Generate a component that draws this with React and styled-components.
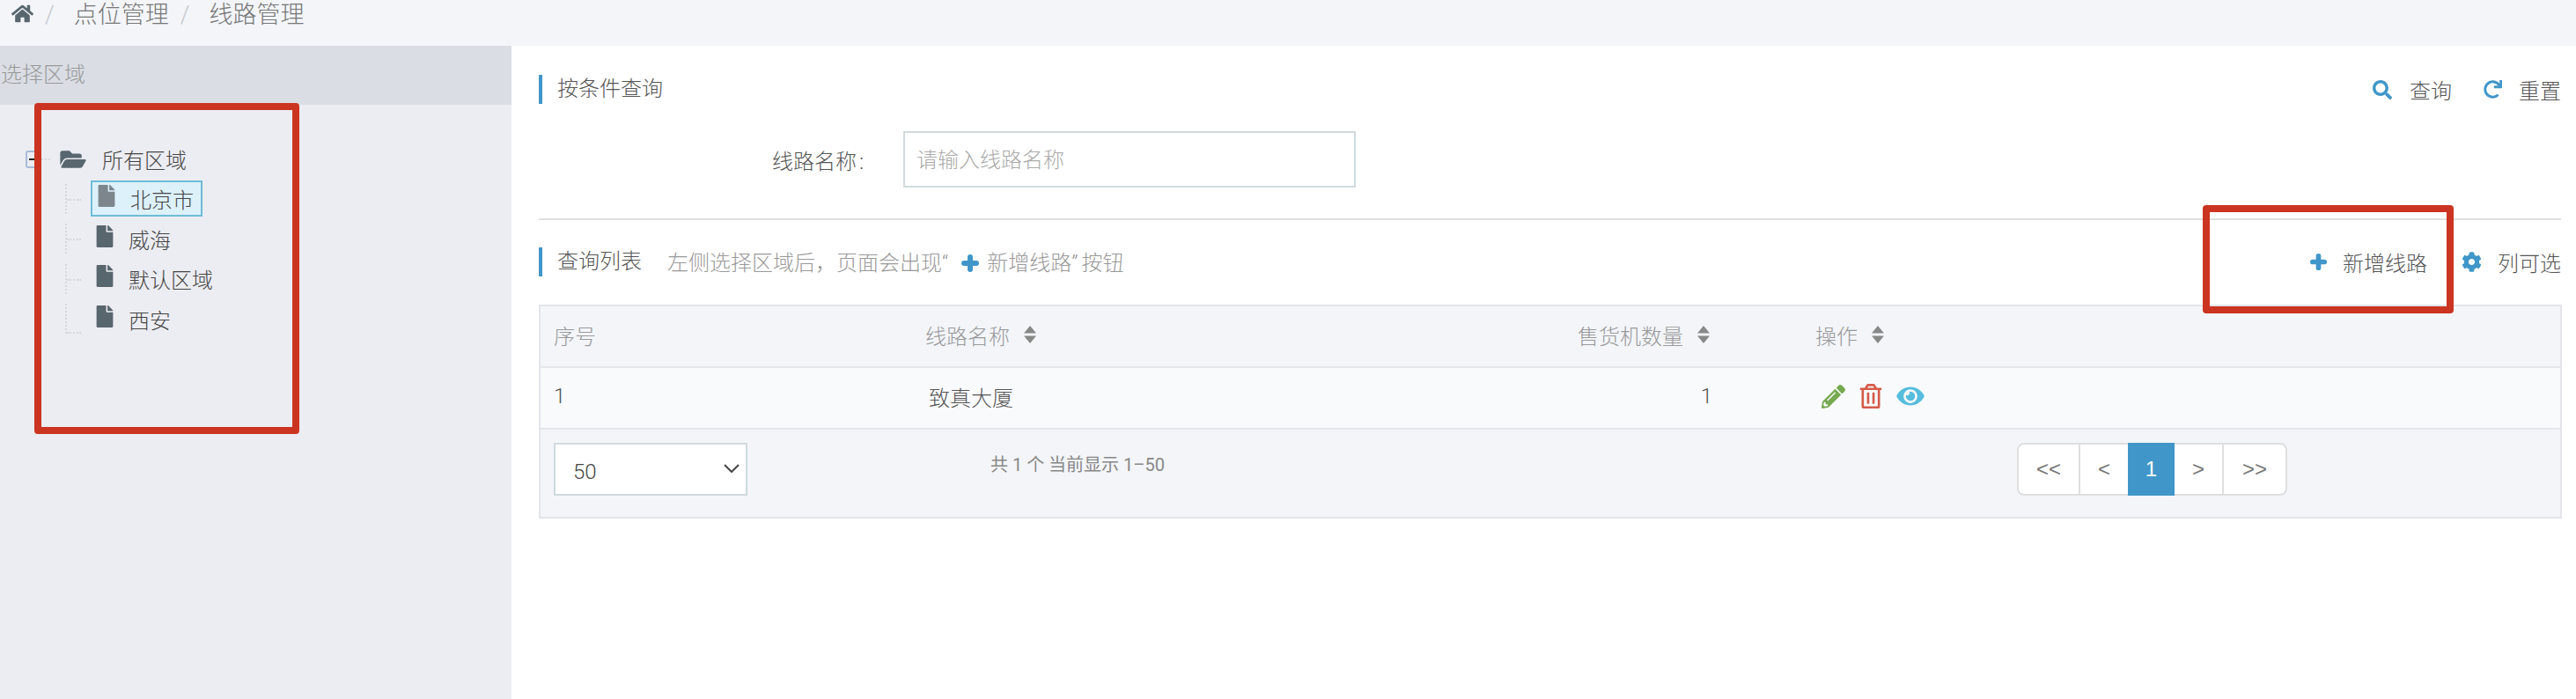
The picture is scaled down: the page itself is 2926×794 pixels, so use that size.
import styled, { createGlobalStyle } from 'styled-components';
import {
  FaHome, FaFolderOpen, FaFile, FaSearch, FaRedo, FaCog,
  FaPencilAlt, FaRegTrashAlt, FaEye,
} from 'react-icons/fa';

const GlobalStyle = createGlobalStyle`
  html, body {
    margin: 0;
    padding: 0;
    background: #fff;
  }
  body {
    font-family: Roboto, "Noto Sans CJK SC", sans-serif;
    font-size: 24px;
    font-weight: 300;
    color: #555;
  }
`;

const Page = styled.div`
  position: relative;
  width: 2926px;
  height: 794px;
  overflow: hidden;
`;

const TopBar = styled.div`
  height: 52px;
  box-sizing: border-box;
  padding: 2px 0 0 13px;
  background: #f3f5f9;
  display: flex;
  align-items: flex-start;
  color: #777;
  font-size: 27px;
  line-height: 30px;
`;

const HomeIcon = styled(FaHome)`
  width: 25px;
  height: 25px;
  margin-top: 1px;
  color: #58666e;
`;

const Slash = styled.span`
  color: #c5c8cc;
  margin: 0 ${(p) => p.$after}px 0 13px;
`;

const Body = styled.div`
  display: flex;
  height: 742px;
`;

const Sidebar = styled.aside`
  width: 581px;
  flex: none;
  background: #ecedf2;
`;

const SidebarTitle = styled.div`
  height: 67px;
  background: #dadde4;
  color: #999;
  line-height: 66px;
  padding-left: 1px;
`;

const Tree = styled.div`
  padding: 39px 0 0 29px;
`;

const RootRow = styled.div`
  display: flex;
  align-items: center;
  height: 45px;
  color: #444;
`;

const Toggle = styled.span`
  box-sizing: border-box;
  width: 18px;
  height: 20px;
  border: 2px solid #a8bbd6;
  border-radius: 3px;
  display: flex;
  align-items: center;
  justify-content: center;

  &::before {
    content: '';
    width: 10px;
    height: 2px;
    background: #222;
  }
`;

const RootDots = styled.span`
  width: 10px;
  margin-right: 11px;
  border-top: 2px dotted #d5d7dc;
`;

const RootFolder = styled(FaFolderOpen)`
  width: 30px;
  height: 26px;
  color: #58666e;
`;

const RootLabel = styled.span`
  margin-left: 18px;
`;

const TreeRow = styled.div`
  display: flex;
  align-items: center;
  height: 45.5px;
  margin-left: 45px;
  color: #444;
`;

const Connector = styled.span`
  position: relative;
  width: 29px;
  height: 34px;
  flex: none;
  border-left: 2px dotted #d5d7dc;
  box-sizing: border-box;

  &::after {
    content: '';
    position: absolute;
    left: 0;
    top: ${(p) => (p.$last ? '32px' : '17px')};
    width: 16px;
    border-top: 2px dotted #d5d7dc;
  }
`;

const TreeNode = styled.span`
  display: flex;
  align-items: center;
  box-sizing: border-box;
  height: 41px;
  padding: 0 ${(p) => (p.$selected ? '8px' : '6px')} 0 6px;
  border: ${(p) => (p.$selected ? '2px solid #6fbcd6' : 'none')};
  background: ${(p) => (p.$selected ? '#ddf1fb' : 'transparent')};
`;

const FileIcon = styled(FaFile)`
  width: 20px;
  height: 25px;
  margin-top: -6px;
  color: ${(p) => (p.$selected ? '#7c868c' : '#58666e')};
`;

const NodeLabel = styled.span`
  margin-left: 17px;
`;

const Main = styled.main`
  flex: 1;
  padding: 33px 16px 0 31px;
`;

const SectionHead = styled.div`
  display: flex;
  align-items: center;
  height: 33px;
  padding-right: 1px;
`;

const SectionTitle = styled.div`
  border-left: 4px solid #4096c8;
  height: 33px;
  line-height: 33px;
  padding-left: 17px;
  color: #555;
`;

const Hint = styled.span`
  margin: -2px 0 0 29px;
  color: #999;
`;

const Quote = styled.span`
  margin-right: 4px;
`;

const PlusGlyph = styled.svg`
  width: ${(p) => p.$size}px;
  height: ${(p) => p.$size}px;
  color: #4096c8;
`;

const HintPlus = styled(PlusGlyph)`
  margin: 0 9px 0 11px;
  vertical-align: -2px;
`;

const Actions = styled.div`
  margin-left: auto;
  display: flex;
  align-items: center;
`;

const Action = styled.span`
  display: flex;
  align-items: center;
  margin-left: ${(p) => p.$gap}px;
  color: #555;

  svg {
    width: ${(p) => p.$icon}px;
    height: ${(p) => p.$icon}px;
    margin-right: ${(p) => p.$space}px;
    color: #4096c8;
  }
`;

const FormRow = styled.div`
  display: flex;
  align-items: center;
  margin-top: 31px;
`;

const FieldLabel = styled.label`
  width: 370px;
  text-align: right;
  color: #555;
`;

const Colon = styled.span`
  padding: 0 1px 0 3px;
`;

const TextInput = styled.div`
  box-sizing: border-box;
  width: 514px;
  height: 64px;
  margin-left: 44px;
  padding-left: 13px;
  border: 2px solid #d0dadf;
  background: #fff;
  color: #aaa;
  line-height: 62px;
`;

const Divider = styled.div`
  height: 2px;
  margin: 35px 1px 31px 0;
  background: #dfdfdf;
`;

const Table = styled.div`
  margin-top: 32px;
  border: 2px solid #e3e5ea;
  background: #f3f5f9;
`;

const Row = styled.div`
  display: grid;
  grid-template-columns: 423px 640px 270px 1fr;
  box-sizing: border-box;
  height: 70px;
  padding-bottom: 4px;
  align-items: center;
  border-bottom: 2px solid #e3e5ea;
  background: ${(p) => (p.$head ? '#f3f5f9' : '#f9fafc')};
  color: ${(p) => (p.$head ? '#999' : '#555')};
`;

const Cell = styled.div`
  display: flex;
  align-items: center;
  justify-content: ${(p) => (p.$right !== undefined ? 'flex-end' : 'flex-start')};
  padding-left: ${(p) => p.$left || 0}px;
  padding-right: ${(p) => p.$right || 0}px;
`;

const SortGlyph = styled.svg`
  width: 14px;
  height: 20px;
  margin-left: 16px;
  color: #888;
`;

const RowIcons = styled.div`
  display: flex;
  align-items: center;
  padding-left: 122px;
`;

const EditIcon = styled(FaPencilAlt)`
  width: 27px;
  height: 27px;
  color: #76a94f;
`;

const TrashIcon = styled(FaRegTrashAlt)`
  width: 26px;
  height: 28px;
  margin-left: 16px;
  color: #d45a48;
`;

const ViewIcon = styled(FaEye)`
  width: 32px;
  height: 28px;
  margin-left: 16px;
  color: #56bddd;
`;

const TableFoot = styled.div`
  display: flex;
  align-items: flex-start;
  box-sizing: border-box;
  height: 99px;
  padding: 15px 0 0 15px;
`;

const PageSize = styled.div`
  box-sizing: border-box;
  width: 220px;
  height: 60px;
  display: flex;
  align-items: center;
  justify-content: space-between;
  padding: 6px 7px 0 20px;
  border: 2px solid #d0dadf;
  background: #fff;
  color: #444;
`;

const ChevronGlyph = styled.svg`
  width: 18px;
  height: 10px;
  margin-top: -8px;
`;

const Summary = styled.div`
  width: 1442px;
  box-sizing: border-box;
  padding-left: 276px;
  line-height: 50px;
  font-size: 20px;
  font-weight: 400;
  color: #888;
`;

const Pager = styled.div`
  display: flex;
  height: 60px;
  box-sizing: border-box;
  border: 2px solid #dfdfdf;
  border-radius: 8px;
  background: #fff;
  font-family: "Liberation Sans", sans-serif;
  font-weight: 400;
`;

const PageCell = styled.span`
  display: flex;
  align-items: center;
  justify-content: center;
  width: ${(p) => p.$w}px;
  margin: ${(p) => (p.$active ? '-2px 0' : '0')};
  border-left: ${(p) => (p.$plain ? 'none' : '2px solid #dfdfdf')};
  background: ${(p) => (p.$active ? '#4096c8' : 'transparent')};
  color: ${(p) => (p.$active ? '#fff' : '#777')};
`;

const Annotation = styled.div`
  position: absolute;
  left: ${(p) => p.$x}px;
  top: ${(p) => p.$y}px;
  width: ${(p) => p.$w}px;
  height: ${(p) => p.$h}px;
  box-sizing: border-box;
  border: 8px solid #cb3421;
  border-radius: 4px;
`;

const Plus = ({ as: Glyph = PlusGlyph, size }) => (
  <Glyph $size={size} viewBox="0 0 20 20" fill="none">
    <path d="M10 3v14M3 10h14" stroke="currentColor" strokeWidth="6" strokeLinecap="round" />
  </Glyph>
);

const Sort = () => (
  <SortGlyph viewBox="0 0 14 20" fill="currentColor">
    <path d="M7 0l7 8.5H0zM0 11.5h14L7 20z" />
  </SortGlyph>
);

const Chevron = () => (
  <ChevronGlyph viewBox="0 0 18 10" fill="none">
    <path d="M1 1l8 8 8-8" stroke="#444" strokeWidth="2" />
  </ChevronGlyph>
);

const areas = ['威海', '默认区域', '西安'];

const pages = [
  { label: '<<', w: 68, plain: true },
  { label: '<', w: 54 },
  { label: '1', w: 53, active: true, plain: true },
  { label: '>', w: 54, plain: true },
  { label: '>>', w: 70 },
];

export default function App() {
  return (
    <Page>
      <GlobalStyle />
      <TopBar>
        <HomeIcon />
        <Slash $after={22}>/</Slash>
        <span>点位管理</span>
        <Slash $after={22}>/</Slash>
        <span>线路管理</span>
      </TopBar>

      <Body>
        <Sidebar>
          <SidebarTitle>选择区域</SidebarTitle>
          <Tree>
            <RootRow>
              <Toggle />
              <RootDots />
              <RootFolder />
              <RootLabel>所有区域</RootLabel>
            </RootRow>
            <TreeRow>
              <Connector />
              <TreeNode $selected>
                <FileIcon $selected />
                <NodeLabel>北京市</NodeLabel>
              </TreeNode>
            </TreeRow>
            {areas.map((name, i) => (
              <TreeRow key={name}>
                <Connector $last={i === areas.length - 1} />
                <TreeNode>
                  <FileIcon />
                  <NodeLabel>{name}</NodeLabel>
                </TreeNode>
              </TreeRow>
            ))}
          </Tree>
        </Sidebar>

        <Main>
          <SectionHead>
            <SectionTitle>按条件查询</SectionTitle>
            <Actions>
              <Action $icon={22} $space={20} $gap={0}><FaSearch />查询</Action>
              <Action $icon={21} $space={19} $gap={36}><FaRedo />重置</Action>
            </Actions>
          </SectionHead>

          <FormRow>
            <FieldLabel>线路名称<Colon>:</Colon></FieldLabel>
            <TextInput>请输入线路名称</TextInput>
          </FormRow>

          <Divider />

          <SectionHead>
            <SectionTitle>查询列表</SectionTitle>
            <Hint>
              左侧选择区域后{'\uFF0C'}页面会出现<Quote>“</Quote><Plus as={HintPlus} size={20} />新增线路<Quote>”</Quote>按钮
            </Hint>
            <Actions>
              <Action $icon={19} $space={18} $gap={0}><Plus size={19} />新增线路</Action>
              <Action $icon={23} $space={18} $gap={39}><FaCog />列可选</Action>
            </Actions>
          </SectionHead>

          <Table>
            <Row $head>
              <Cell $left={15}>序号</Cell>
              <Cell $left={14}>线路名称<Sort /></Cell>
              <Cell $right={5}>售货机数量<Sort /></Cell>
              <Cell $left={115}>操作<Sort /></Cell>
            </Row>
            <Row>
              <Cell $left={15}>1</Cell>
              <Cell $left={18}>致真大厦</Cell>
              <Cell $right={2}>1</Cell>
              <RowIcons>
                <EditIcon />
                <TrashIcon />
                <ViewIcon />
              </RowIcons>
            </Row>
            <TableFoot>
              <PageSize>50<Chevron /></PageSize>
              <Summary>共 1 个 当前显示 1–50</Summary>
              <Pager>
                {pages.map((p) => (
                  <PageCell key={p.label} $w={p.w} $plain={p.plain} $active={p.active}>
                    {p.label}
                  </PageCell>
                ))}
              </Pager>
            </TableFoot>
          </Table>
        </Main>
      </Body>

      <Annotation $x={39} $y={117} $w={301} $h={376} />
      <Annotation $x={2502} $y={233} $w={285} $h={123} />
    </Page>
  );
}
